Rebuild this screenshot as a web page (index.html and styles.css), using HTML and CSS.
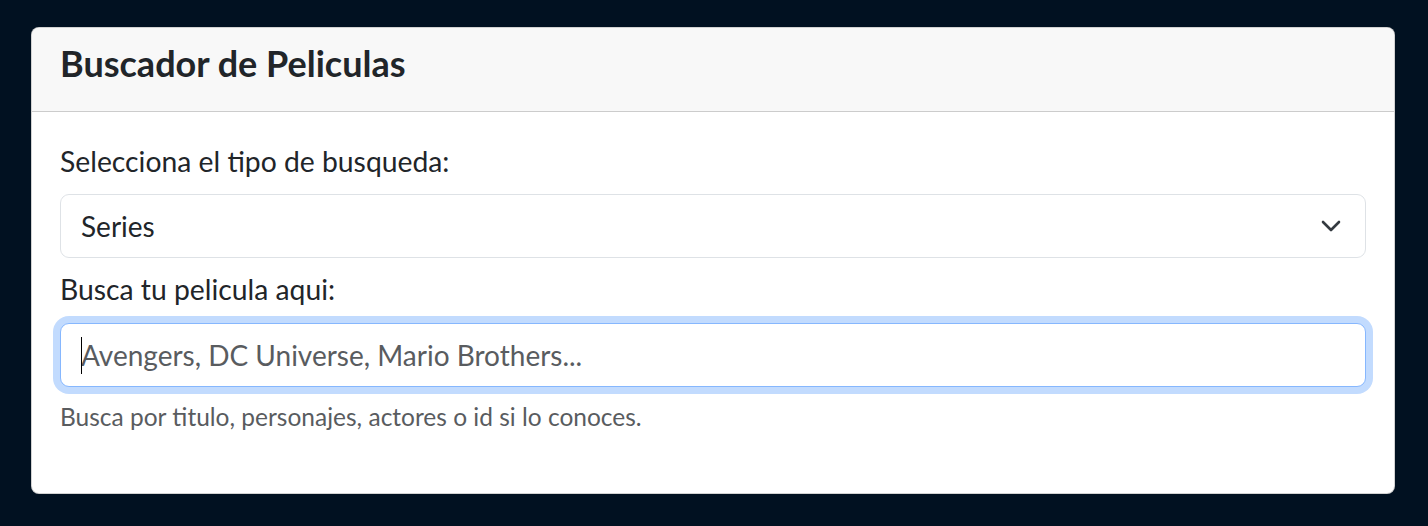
FILE: index.html
```html
<!DOCTYPE html>
<html lang="es">
<head>
<meta charset="utf-8">
<title>Buscador de Peliculas</title>
<link rel="stylesheet" href="styles.css">
</head>
<body>
  <main class="page">
    <section class="card">
      <header class="card-header">
        <h5 class="card-title">Buscador de Peliculas</h5>
      </header>
      <div class="card-body">
        <label class="form-label" for="tipo">Selecciona el tipo de busqueda:</label>
        <div class="select-wrap">
          <select id="tipo" class="form-select">
            <option>Series</option>
            <option>Peliculas</option>
          </select>
          <svg class="chevron" width="20" height="12" viewBox="0 0 20 12" aria-hidden="true">
            <polyline points="2,2 10,10 18,2" fill="none" stroke="#343a40" stroke-width="2.6" stroke-linecap="round" stroke-linejoin="round"/>
          </svg>
        </div>
        <label class="form-label second" for="busqueda">Busca tu pelicula aqui:</label>
        <div class="input-wrap">
          <input id="busqueda" class="form-control is-focused" type="text" placeholder="Avengers, DC Universe, Mario Brothers...">
          <span class="caret" aria-hidden="true"></span>
        </div>
        <div class="form-text">Busca por titulo, personajes, actores o id si lo conoces.</div>
      </div>
    </section>
  </main>
</body>
</html>
```

FILE: styles.css
```css
html, body {
  margin: 0;
  padding: 0;
  background: #011121;
}

body {
  font-family: "Segoe UI", Lato, "Noto Sans", sans-serif;
  color: #212529;
  font-size: 28px;
  line-height: 1.5;
}

.page {
  padding: 27px 33px 32px 31px;
}

.card {
  display: flex;
  flex-direction: column;
  background: #ffffff;
  border: 1px solid rgba(0, 0, 0, 0.175);
  border-radius: 8px;
  overflow: hidden;
}

.card-header {
  background: #f8f8f8;
  border-bottom: 1px solid rgba(0, 0, 0, 0.175);
  padding: 14px 28px 13px 28px;
}

.card-title {
  margin: 0 0 14px 0;
  font-size: 36px;
  font-weight: 700;
  line-height: 42px;
}

.card-body {
  display: flex;
  flex-direction: column;
  padding: 28px 28px 58px 28px;
}

.form-label {
  display: block;
  margin-bottom: 12px;
  line-height: 42px;
  font-size: 28.3px;
}

.form-label.second {
  margin-top: 10px;
  margin-bottom: 13px;
}

.select-wrap,
.input-wrap {
  position: relative;
}

.form-select {
  display: block;
  width: 100%;
  height: 64px;
  box-sizing: border-box;
  margin: 0;
  padding: 0 60px 0 20px;
  font-family: inherit;
  font-size: 28px;
  color: #212529;
  background: #ffffff;
  border: 1px solid #dee2e6;
  border-radius: 9px;
  appearance: none;
  -webkit-appearance: none;
  outline: none;
}

.chevron {
  position: absolute;
  right: 25px;
  top: 26px;
}

.form-control {
  display: block;
  width: 100%;
  height: 64px;
  box-sizing: border-box;
  margin: 0;
  padding: 0 20px;
  font-family: inherit;
  font-size: 28px;
  color: #212529;
  background: #ffffff;
  border: 1px solid #dee2e6;
  border-radius: 9px;
  outline: none;
}

.form-control::placeholder {
  color: #595c5f;
  opacity: 1;
}

.form-control.is-focused,
.form-control:focus {
  border-color: #86b7fe;
  box-shadow: 0 0 0 7px rgba(13, 110, 253, 0.25);
}

.caret {
  position: absolute;
  left: 21px;
  top: 14px;
  width: 1px;
  height: 37px;
  background: #000000;
}

.form-text {
  margin-top: 12px;
  font-size: 24.5px;
  line-height: 36px;
  color: #595c5f;
}
```
